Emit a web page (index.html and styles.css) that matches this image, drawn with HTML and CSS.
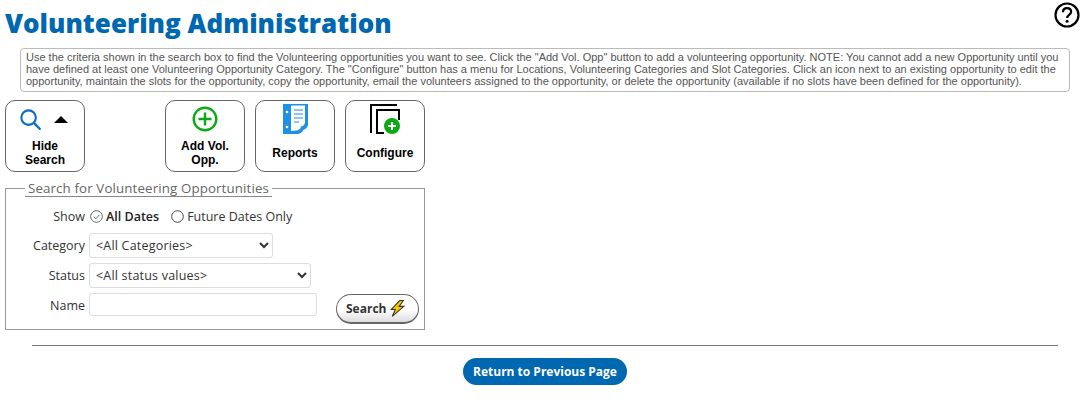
FILE: index.html
```html
<!DOCTYPE html>
<html lang="en">
<head>
  <meta charset="UTF-8" />
  <title>Volunteering Administration</title>
  <link rel="stylesheet" href="styles.css">
</head>
<body>

<header class="page-header">
  <h1>Volunteering Administration</h1>
  <svg class="help-icon" viewBox="0 0 26 26" width="26" height="26">
    <circle cx="13" cy="13" r="11.5" fill="none" stroke="#000" stroke-width="2.2"/>
    <path d="M9 10.2c0-2.5 1.8-4 4.1-4s4 1.500 4 3.600c0 3-4 3.200-4 6.200" fill="none" stroke="#000" stroke-width="2.2"/>
    <circle cx="13.100" cy="19.300" r="1.500" fill="#000"/>
  </svg>
</header>

<p class="note">Use the criteria shown in the search box to find the Volunteering opportunities you want to see. Click the "Add Vol. Opp" button to add a volunteering opportunity. NOTE: You cannot add a new Opportunity until you have defined at least one Volunteering Opportunity Category. The "Configure" button has a menu for Locations, Volunteering Categories and Slot Categories. Click an icon next to an existing opportunity to edit the opportunity, maintain the slots for the opportunity, copy the opportunity, email the volunteers assigned to the opportunity, or delete the opportunity (available if no slots have been defined for the opportunity).</p>

<div class="toolbar">
  <button class="tool tool-search">
    <span class="tool-icons">
      <svg viewBox="0 0 22 22" width="21" height="21">
        <circle cx="9" cy="9" r="7.600" fill="none" stroke="#0a6cc4" stroke-width="2.200"/>
        <path d="M14.500 14.500l7 7" stroke="#0a6cc4" stroke-width="2.400" fill="none"/>
      </svg>
      <svg viewBox="0 0 14 7" width="14" height="7"><path d="M7 0l7 7H0z" fill="#000"/></svg>
    </span>
    <span>Hide<br>Search</span>
  </button>

  <button class="tool">
    <svg viewBox="0 0 26 26" width="26" height="26">
      <circle cx="13" cy="13" r="11.300" fill="none" stroke="#0cab16" stroke-width="2.400"/>
      <path d="M13 6.500v13M6.500 13h13" stroke="#0cab16" stroke-width="2.400" fill="none"/>
    </svg>
    <span>Add Vol.<br>Opp.</span>
  </button>

  <button class="tool tool-top">
    <svg viewBox="0 0 25 30" width="25" height="30">
      <path d="M0 0h25v21q-1 4-5 5-1 3-5 4H0z" fill="#1e90e6"/>
      <path d="M8 1.500h14v17q-.5 3.500-4 4-.5 3-4.500 4L8 27z" fill="#fff"/>
      <path d="M11 6h9M11 10h9M11 14h9M11 18h5" stroke="#1e90e6" stroke-width="1.200"/>
      <circle cx="4" cy="8" r="1.300" fill="#fff"/>
      <circle cx="4" cy="23" r="1.300" fill="#fff"/>
    </svg>
    <span>Reports</span>
  </button>

  <button class="tool tool-top">
    <svg viewBox="0 0 30 30" width="30" height="30">
      <path d="M1 29V1h26" fill="none" stroke="#000" stroke-width="2"/>
      <path d="M7 30V6h22v10" fill="none" stroke="#000" stroke-width="2"/>
      <path d="M7 29h7" stroke="#000" stroke-width="2"/>
      <circle cx="22" cy="22" r="8" fill="#0cab16"/>
      <path d="M22 18v8M18 22h8" stroke="#fff" stroke-width="2"/>
    </svg>
    <span>Configure</span>
  </button>
</div>

<fieldset class="search-box">
  <legend>Search for Volunteering Opportunities</legend>
  <div class="form-row row-show">
    <label class="row-label">Show</label>
    <span class="radio radio-on">
      <svg viewBox="0 0 13 13" width="13" height="13">
        <circle cx="6.500" cy="6.500" r="5.800" fill="none" stroke="#666"/>
        <path d="M3.800 6.800l2 2 3.600-4" fill="none" stroke="#666"/>
      </svg>
      All Dates
    </span>
    <span class="radio">
      <svg viewBox="0 0 13 13" width="13" height="13">
        <circle cx="6.500" cy="6.500" r="5.800" fill="none" stroke="#444"/>
      </svg>
      Future Dates Only
    </span>
  </div>
  <div class="form-row row-category">
    <label class="row-label">Category</label>
    <select class="field select-category"><option>&lt;All Categories&gt;</option></select>
  </div>
  <div class="form-row row-status">
    <label class="row-label">Status</label>
    <select class="field select-status"><option>&lt;All status values&gt;</option></select>
  </div>
  <div class="form-row row-name">
    <label class="row-label">Name</label>
    <input class="field input-name" type="text">
    <button class="search-btn">Search
      <svg viewBox="0 0 14 16" width="15" height="17">
        <path d="M9 .5L1 9h4l-3 6.500L13 6H8.500l4-5.500z" fill="#f5c800" stroke="#333" stroke-width="1"/>
      </svg>
    </button>
  </div>
</fieldset>

<hr class="divider">

<div class="bottom">
  <button class="return-btn">Return to Previous Page</button>
</div>

</body>
</html>
```

FILE: styles.css
```css
body {
  font-family: "Open Sans", "Noto Sans", sans-serif;
  background-color: white;
  margin: 0;
  color: #222;
}

.page-header {
  display: flex;
  justify-content: space-between;
  height: 48px;
}

h1 {
  margin: 5px 0 0 5px;
  font-size: 26px;
  line-height: 36px;
  font-weight: 800;
  color: #0067b1;
}

.help-icon {
  margin: 2px 11px 0 0;
}

.note {
  margin: 0 21px 0 20px;
  height: 44px;
  box-sizing: border-box;
  padding: 2px 5px;
  border: 1px solid #bbb;
  border-radius: 4px;
  font-family: "Liberation Sans", Arial, sans-serif;
  font-size: 11px;
  line-height: 12px;
  color: #555;
}

.toolbar {
  display: flex;
  gap: 10px;
  margin: 8px 0 0 5px;
}

.tool {
  width: 80px;
  height: 72px;
  padding: 0;
  display: flex;
  flex-direction: column;
  align-items: center;
  justify-content: flex-start;
  background: white;
  border: 1px solid #666;
  border-radius: 10px;
  font-family: "Liberation Sans", Arial, sans-serif;
  font-size: 12px;
  font-weight: bold;
  line-height: 14px;
  color: #000;
  cursor: pointer;
  padding-top: 5px;
}

.tool span:last-child {
  margin-top: 7px;
}

.tool-search {
  margin-right: 70px;
  padding-top: 8px;
}

.tool-search span:last-child {
  margin-top: 9px;
}

.tool-icons {
  display: flex;
  align-items: center;
  gap: 13px;
  margin-left: -3px;
}

.tool-top {
  padding-top: 3px;
}

.tool-top span:last-child {
  margin-top: 12px;
}

.search-box {
  width: 420px;
  height: 150px;
  box-sizing: border-box;
  margin: 8px 0 0 5px;
  padding: 0;
  border: 1px solid #999;
  min-width: 0;
}

legend {
  margin-left: 19px;
  padding: 0 3px;
  font-size: 13.300px;
  line-height: 16px;
  color: #666;
  border-bottom: 1px solid #888;
  letter-spacing: 0.13px;
}

.form-row {
  display: flex;
  align-items: center;
  font-size: 12.500px;
}

.row-label {
  width: 79px;
  text-align: right;
  margin-right: 4px;
  flex: none;
  color: #333;
}

.row-show {
  margin-top: 9px;
  height: 20px;
}

.radio {
  display: flex;
  align-items: center;
  gap: 3px;
  margin-right: 11px;
  margin-left: 1px;
  color: #333;
}

.radio-on {
  font-weight: 600;
  color: #222;
}

.field {
  box-sizing: border-box;
  height: 25px;
  background: white;
  border: 1px solid #ddd;
  border-radius: 3px;
  font-family: "Open Sans", sans-serif;
  font-size: 12.500px;
  letter-spacing: 0.2px;
  color: #333;
  padding: 0 2px;
}

.row-category {
  margin-top: 7px;
}

.select-category {
  width: 184px;
}

.row-status {
  margin-top: 5px;
}

.select-status {
  width: 222px;
}

.row-name {
  margin-top: 5px;
  align-items: flex-start;
}

.row-name .row-label {
  line-height: 25px;
}

.input-name {
  width: 228px;
  height: 23px;
}

.search-btn {
  display: flex;
  align-items: center;
  gap: 4px;
  margin: 1px 0 0 19px;
  width: 83px;
  height: 30px;
  padding: 0 0 0 9px;
  background: linear-gradient(#fff 55%, #ddd);
  border: 1px solid #666;
  border-bottom-width: 2px;
  border-radius: 15px;
  font-family: "Open Sans", sans-serif;
  font-size: 12px;
  font-weight: 700;
  color: #333;
  cursor: pointer;
}

.divider {
  margin: 15px 33px 0 32px;
  border: none;
  border-top: 1px solid #777;
}

.bottom {
  display: flex;
  justify-content: center;
  margin-top: 12px;
}

.return-btn {
  width: 164px;
  height: 27px;
  margin-left: -1px;
  padding: 0;
  background-color: #0067b1;
  border: none;
  border-radius: 14px;
  font-family: "Open Sans", sans-serif;
  font-size: 12px;
  font-weight: 700;
  color: white;
  cursor: pointer;
}
```
